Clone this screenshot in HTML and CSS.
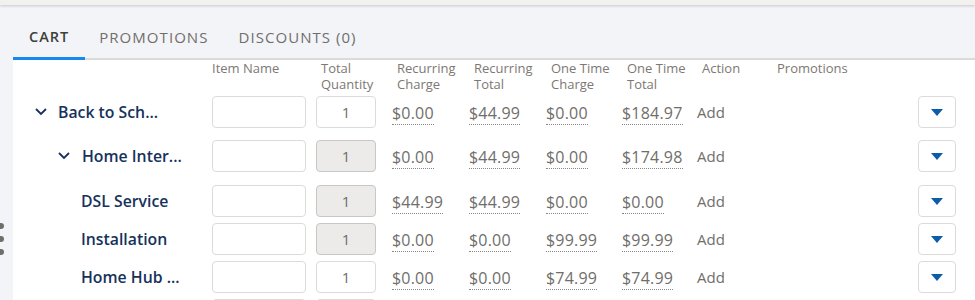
FILE: index.html
```html
<!DOCTYPE html>
<html>
<head>
<meta charset="utf-8">
<link rel="stylesheet" href="styles.css">
</head>
<body>
<div class="topbar"></div>
<div class="handle"><span></span><span></span><span></span></div>
<div class="main">
  <ul class="tabs">
    <li class="tab active">CART</li>
    <li class="tab">PROMOTIONS</li>
    <li class="tab">DISCOUNTS (0)</li>
  </ul>
  <div class="panel">
    <div class="grid head">
      <div></div>
      <div class="h h-item">Item Name</div>
      <div class="h">Total<br>Quantity</div>
      <div class="h">Recurring<br>Charge</div>
      <div class="h">Recurring<br>Total</div>
      <div class="h">One Time<br>Charge</div>
      <div class="h">One Time<br>Total</div>
      <div class="h">Action</div>
      <div class="h h-promo">Promotions</div>
    </div>

    <div class="grid row r-tall">
      <div class="name lvl1"><svg class="chev" viewBox="0 0 12 8"><polyline points="1,1 6,6 11,1"/></svg>Back to Sch...</div>
      <div class="cell"><div class="inp"></div></div>
      <div class="cell"><div class="inp qty">1</div></div>
      <div class="cell"><span class="val">$0.00</span></div>
      <div class="cell"><span class="val">$44.99</span></div>
      <div class="cell"><span class="val">$0.00</span></div>
      <div class="cell"><span class="val">$184.97</span></div>
      <div class="cell act">Add</div>
      <div class="cell promo"><div class="dd"><svg viewBox="0 0 12 7"><polygon points="0,0 12,0 6,7"/></svg></div></div>
    </div>

    <div class="grid row r-tall2">
      <div class="name lvl2"><svg class="chev" viewBox="0 0 12 8"><polyline points="1,1 6,6 11,1"/></svg>Home Inter...</div>
      <div class="cell"><div class="inp"></div></div>
      <div class="cell"><div class="inp qty dis">1</div></div>
      <div class="cell"><span class="val">$0.00</span></div>
      <div class="cell"><span class="val">$44.99</span></div>
      <div class="cell"><span class="val">$0.00</span></div>
      <div class="cell"><span class="val">$174.98</span></div>
      <div class="cell act">Add</div>
      <div class="cell promo"><div class="dd"><svg viewBox="0 0 12 7"><polygon points="0,0 12,0 6,7"/></svg></div></div>
    </div>

    <div class="grid row">
      <div class="name leaf">DSL Service</div>
      <div class="cell"><div class="inp"></div></div>
      <div class="cell"><div class="inp qty dis">1</div></div>
      <div class="cell"><span class="val">$44.99</span></div>
      <div class="cell"><span class="val">$44.99</span></div>
      <div class="cell"><span class="val">$0.00</span></div>
      <div class="cell"><span class="val">$0.00</span></div>
      <div class="cell act">Add</div>
      <div class="cell promo"><div class="dd"><svg viewBox="0 0 12 7"><polygon points="0,0 12,0 6,7"/></svg></div></div>
    </div>

    <div class="grid row">
      <div class="name leaf">Installation</div>
      <div class="cell"><div class="inp"></div></div>
      <div class="cell"><div class="inp qty dis">1</div></div>
      <div class="cell"><span class="val">$0.00</span></div>
      <div class="cell"><span class="val">$0.00</span></div>
      <div class="cell"><span class="val">$99.99</span></div>
      <div class="cell"><span class="val">$99.99</span></div>
      <div class="cell act">Add</div>
      <div class="cell promo"><div class="dd"><svg viewBox="0 0 12 7"><polygon points="0,0 12,0 6,7"/></svg></div></div>
    </div>

    <div class="grid row">
      <div class="name leaf">Home Hub ...</div>
      <div class="cell"><div class="inp"></div></div>
      <div class="cell"><div class="inp qty">1</div></div>
      <div class="cell"><span class="val">$0.00</span></div>
      <div class="cell"><span class="val">$0.00</span></div>
      <div class="cell"><span class="val">$74.99</span></div>
      <div class="cell"><span class="val">$74.99</span></div>
      <div class="cell act">Add</div>
      <div class="cell promo"><div class="dd"><svg viewBox="0 0 12 7"><polygon points="0,0 12,0 6,7"/></svg></div></div>
    </div>

    <div class="grid row">
      <div class="name leaf"></div>
      <div class="cell"><div class="inp"></div></div>
      <div class="cell"><div class="inp qty"></div></div>
    </div>
  </div>
</div>
</body>
</html>
```
FILE: styles.css
```css
* { box-sizing: border-box; }
html, body { margin: 0; padding: 0; }
body {
  background: #f3f4f8;
  font-family: "Open Sans", "Noto Sans", sans-serif;
  height: 300px;
  overflow: hidden;
  position: relative;
}
.topbar {
  height: 5px;
  background: #f2f1ef;
  box-shadow: 0 1px 3px rgba(0,0,0,0.18);
  position: relative;
  z-index: 2;
}
.handle {
  position: absolute;
  left: -2px;
  top: 223px;
  display: flex;
  flex-direction: column;
  gap: 7px;
}
.handle span {
  width: 6px;
  height: 6px;
  border-radius: 50%;
  background: #706e6b;
}
.main {
  margin-left: 13px;
}
.tabs {
  list-style: none;
  margin: 0;
  padding: 0;
  display: flex;
  height: 55px;
  border-bottom: 2px solid #dddbda;
  align-items: stretch;
}
.tab {
  padding: 22px 16px 0 14px;
  font-size: 15px;
  letter-spacing: 1.05px;
  color: #706e6b;
  line-height: 20px;
  margin-bottom: -2px;
}
.tab.active {
  color: #3e3e3c;
  font-weight: 600;
  padding-left: 16px;
  padding-right: 16px;
  letter-spacing: 1px;
  font-size: 14.5px;
  border-bottom: 3px solid #1589ee;
}
.panel {
  background: #fff;
  height: 240px;
}
.grid {
  display: grid;
  grid-template-columns: 199px 104px 76px 77px 77px 76px 75px 80px 1fr;
}
.head {
  height: 36px;
  padding-top: 0;
}
.h {
  font-size: 13px;
  line-height: 16px;
  color: #7d7873;
  padding-left: 5px;
}
.h-item { padding-left: 0; }
.h-promo { padding-left: 0; }
.row {
  height: 38px;
  align-items: start;
}
.row.r-tall { height: 44px; }
.row.r-tall2 { height: 45px; }
.name {
  height: 32px;
  display: flex;
  align-items: center;
  font-size: 15.8px;
  font-weight: 600;
  color: #16325c;
  white-space: nowrap;
}
.lvl1 { padding-left: 22px; }
.lvl2 { padding-left: 45px; }
.leaf { padding-left: 68px; }
.chev {
  width: 12px;
  height: 8px;
  margin-right: 11px;
  fill: none;
  stroke: #16325c;
  stroke-width: 1.8;
}
.lvl2 .chev { margin-right: 12px; }
.cell {
  height: 32px;
  display: flex;
  align-items: center;
}
.inp {
  width: 94px;
  height: 32px;
  border: 1px solid #dddbda;
  border-radius: 4px;
  background: #fff;
}
.qty {
  width: 60px;
  display: flex;
  align-items: center;
  justify-content: center;
  font-size: 15px;
  color: #706e6b;
}
.qty.dis {
  background: #ecebea;
  border-color: #c9c7c5;
}
.val {
  font-size: 16px;
  letter-spacing: 0.2px;
  color: #706e6b;
  line-height: 19px;
  border-bottom: 1px dotted #8a8886;
  padding-bottom: 1px;
  margin-top: 4px;
}
.act {
  font-size: 15px;
  color: #706e6b;
}
.promo {
  justify-content: flex-end;
  padding-right: 19px;
}
.dd {
  width: 38px;
  height: 32px;
  border: 1px solid #dddbda;
  border-radius: 4px;
  display: flex;
  align-items: center;
  justify-content: center;
}
.dd svg {
  width: 12px;
  height: 7px;
  fill: #0b5cab;
}
```
